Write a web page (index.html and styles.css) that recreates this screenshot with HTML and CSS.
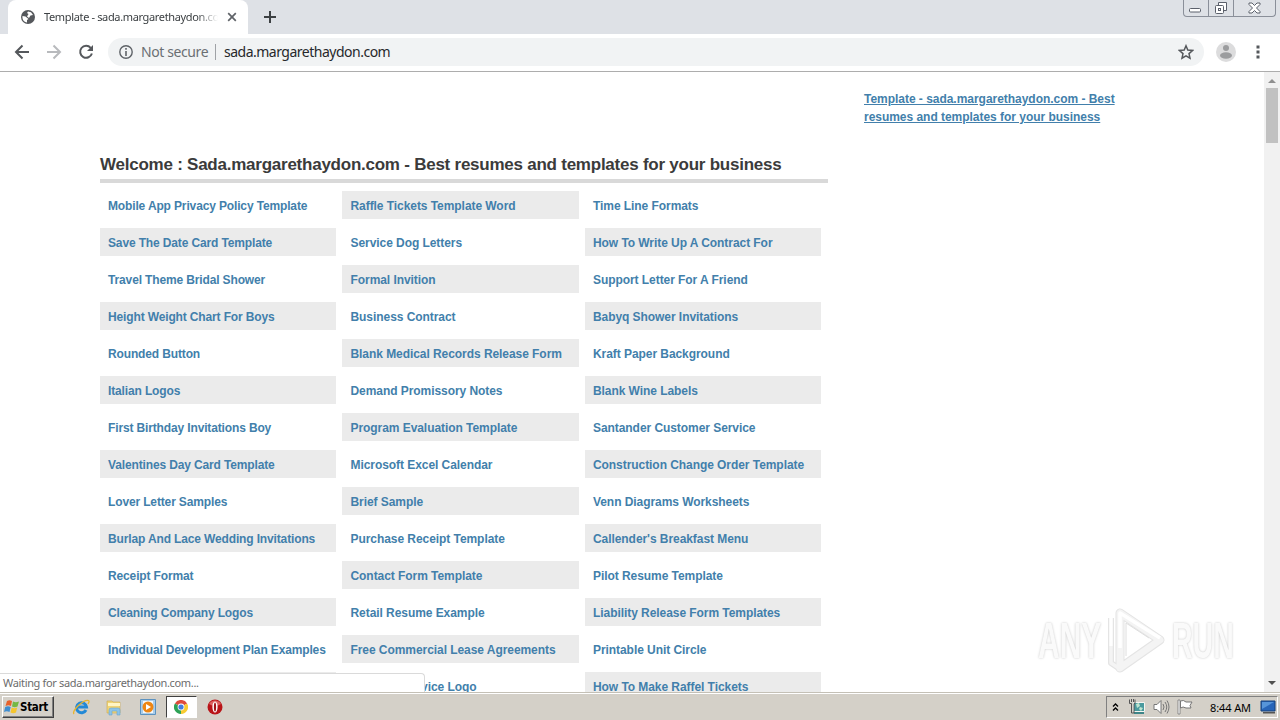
FILE: index.html
```html
<!DOCTYPE html>
<html lang="en">
<head>
    <meta charset="UTF-8">
    <title>Template - sada.margarethaydon.com</title>
    <link rel="stylesheet" href="styles.css">
</head>
<body>
    <div class="tabstrip">
        <div class="tab">
            <svg class="globe" width="14" height="14" viewBox="0 0 14 14"><circle cx="7" cy="7" r="7" fill="#55585c"/><path d="M1.500 6l3 .5 3 2.500-1.500 1v2.500C3 12 1 9.500 1.500 6zM7 1.500l3 .8 2 2.700-2.500.5L8 8 6 6.500 7.500 4 6 3z" fill="#fff"/></svg>
            <span class="tab-title">Template - sada.margarethaydon.com</span>
            <svg class="tab-close" width="10" height="10" viewBox="0 0 10 10"><path d="M1.200 1.200l7.600 7.600M8.800 1.200L1.200 8.800" stroke="#5f6368" stroke-width="1.700"/></svg>
        </div>
        <svg class="new-tab" width="12" height="12" viewBox="0 0 12 12"><path d="M6 0v12M0 6h12" stroke="#3c4043" stroke-width="2"/></svg>
        <div class="window-buttons">
            <span class="win-min"><svg width="13" height="5"><rect x=".5" y=".5" width="11" height="3.500" rx="1" fill="#fff" stroke="#5b606b"/></svg></span>
            <span class="win-max"><svg width="14" height="14"><path d="M4.500 4V1.500h8v8H10" fill="#fff" stroke="#5b606b"/><rect x="1.500" y="4.500" width="8" height="8" rx="1" fill="#fff" stroke="#5b606b"/><rect x="4.500" y="7.500" width="2" height="2" fill="none" stroke="#5b606b"/></svg></span>
            <span class="win-close"><svg width="13" height="12"><path d="M1 1h3l2.500 2.500L9 1h3v1.500L8.500 6l3.500 3.500V11H9L6.500 8.500 4 11H1V9.500L4.500 6 1 2.500z" fill="#fff" stroke="#5b606b"/></svg></span>
        </div>
    </div>

    <div class="toolbar">
        <svg class="nav" width="16" height="16" viewBox="0 0 16 16"><path d="M15 8H2.500M8.500 1.500L2 8l6.500 6.500" fill="none" stroke="#55585c" stroke-width="2"/></svg>
        <svg class="nav" width="16" height="16" viewBox="0 0 16 16"><path d="M1 8h12.500M7.500 1.500L14 8l-6.500 6.500" fill="none" stroke="#b8babd" stroke-width="2"/></svg>
        <svg class="nav" width="16" height="16" viewBox="0 0 16 16"><path d="M12.700 3.800A6 6 0 1 0 13.900 9.500" fill="none" stroke="#55585c" stroke-width="2"/><path d="M15 1v6H9z" fill="#55585c"/></svg>
        <div class="omnibox">
            <svg width="14" height="14" viewBox="0 0 14 14"><circle cx="7" cy="7" r="6.200" fill="none" stroke="#5f6368" stroke-width="1.400"/><path d="M7 3v1.700M7 6v5" stroke="#5f6368" stroke-width="1.600"/></svg>
            <span class="not-secure">Not secure</span>
            <span class="divider"></span>
            <span class="url">sada.margarethaydon.com</span>
            <svg class="star" width="16" height="16" viewBox="0 0 16 16"><path d="M8 1.800l1.800 4.300 4.700.4-3.500 3.100 1 4.600L8 11.800l-4 2.400 1-4.600L1.500 6.500l4.700-.4z" fill="none" stroke="#55585c" stroke-width="1.500"/></svg>
        </div>
        <svg class="avatar" width="20" height="20" viewBox="0 0 20 20"><circle cx="10" cy="10" r="10" fill="#dcdcdd"/><circle cx="10" cy="6" r="3" fill="#9b9c9e"/><ellipse cx="10" cy="13.500" rx="6" ry="3.200" fill="#9b9c9e"/></svg>
        <svg class="menu" width="4" height="14" viewBox="0 0 4 14"><path d="M.5.500h3v3h-3zM.5 5.500h3v3h-3zM.5 10.500h3v3h-3z" fill="#55585c"/></svg>
    </div>

    <div class="viewport">
        <div class="page">
            <div class="main">
                <h1>Welcome : Sada.margarethaydon.com - Best resumes and templates for your business</h1>
                <ul class="links">
                    <li><a>Mobile App Privacy Policy Template</a></li>
                    <li><a>Raffle Tickets Template Word</a></li>
                    <li><a>Time Line Formats</a></li>
                    <li><a>Save The Date Card Template</a></li>
                    <li><a>Service Dog Letters</a></li>
                    <li><a>How To Write Up A Contract For</a></li>
                    <li><a>Travel Theme Bridal Shower</a></li>
                    <li><a>Formal Invition</a></li>
                    <li><a>Support Letter For A Friend</a></li>
                    <li><a>Height Weight Chart For Boys</a></li>
                    <li><a>Business Contract</a></li>
                    <li><a>Babyq Shower Invitations</a></li>
                    <li><a>Rounded Button</a></li>
                    <li><a>Blank Medical Records Release Form</a></li>
                    <li><a>Kraft Paper Background</a></li>
                    <li><a>Italian Logos</a></li>
                    <li><a>Demand Promissory Notes</a></li>
                    <li><a>Blank Wine Labels</a></li>
                    <li><a>First Birthday Invitations Boy</a></li>
                    <li><a>Program Evaluation Template</a></li>
                    <li><a>Santander Customer Service</a></li>
                    <li><a>Valentines Day Card Template</a></li>
                    <li><a>Microsoft Excel Calendar</a></li>
                    <li><a>Construction Change Order Template</a></li>
                    <li><a>Lover Letter Samples</a></li>
                    <li><a>Brief Sample</a></li>
                    <li><a>Venn Diagrams Worksheets</a></li>
                    <li><a>Burlap And Lace Wedding Invitations</a></li>
                    <li><a>Purchase Receipt Template</a></li>
                    <li><a>Callender's Breakfast Menu</a></li>
                    <li><a>Receipt Format</a></li>
                    <li><a>Contact Form Template</a></li>
                    <li><a>Pilot Resume Template</a></li>
                    <li><a>Cleaning Company Logos</a></li>
                    <li><a>Retail Resume Example</a></li>
                    <li><a>Liability Release Form Templates</a></li>
                    <li><a>Individual Development Plan Examples</a></li>
                    <li><a>Free Commercial Lease Agreements</a></li>
                    <li><a>Printable Unit Circle</a></li>
                    <li></li>
                    <li><a>Catering Service Logo</a></li>
                    <li><a>How To Make Raffel Tickets</a></li>
                </ul>
            </div>
            <div class="sidebar">
                <a>Template - sada.margarethaydon.com - Best<br>resumes and templates for your business</a>
            </div>
        </div>
        <div class="scrollbar">
            <svg class="arrow" width="8" height="4"><path d="M0 4l4-4 4 4z" fill="#8f8f8f"/></svg>
            <div class="thumb"></div>
            <svg class="arrow arrow-down" width="8" height="4"><path d="M0 0h8L4 4z" fill="#505050"/></svg>
        </div>
        <div class="status">Waiting for sada.margarethaydon.com...</div>
        <div class="watermark">
            <span class="mark-any">ANY</span>
            <svg width="60" height="66" viewBox="0 0 60 66"><g fill="none" stroke-linejoin="round"><path d="M14 5v55L54 32z" stroke="#e4e4e4" stroke-width="9"/><path d="M5 10v45l9 6" stroke="#e4e4e4" stroke-width="6"/><path d="M14 5v55L54 32z" stroke="#f4f4f4" stroke-width="7"/><path d="M20 48V15l23 15" stroke="#dedede" stroke-width="1"/><path d="M14 40V5l40 25M5 38V10" stroke="#fff" stroke-width="3.500"/><path d="M5 38v17l9 6" stroke="#f4f4f4" stroke-width="3.500"/></g></svg>
            <span class="mark-run">RUN</span>
        </div>
    </div>

    <div class="taskbar">
        <div class="start">
            <svg width="16" height="16" viewBox="0 0 16 16"><path d="M3 2c2-1 3-1 5 0L7 7C5 6 4 6 1.500 7z" fill="#e8622c"/><path d="M9 2.500c2 1 3.500 1 6 0L13.500 7.500c-2 1-3.500 1-5.500 0z" fill="#75b843"/><path d="M1.200 8c2-1 3.500-1 5.500 0l-1.200 5c-2-1-3.500-1-5.500 0z" fill="#408ed0"/><path d="M7.700 8.500c2 1 3.500 1 5.500 0l-1.200 5c-2 1-3.500 1-5.500 0z" fill="#f5c52d"/></svg>
            <span>Start</span>
        </div>
        <div class="task">
            <svg width="18" height="18" viewBox="0 0 18 18"><path d="M14 12A5 5 0 1 1 14.500 9H5" fill="none" stroke="#2389d6" stroke-width="3"/><path d="M2 16C-1 13 12 1 16.500 2.500c1 .5.500 2-.5 3.500" fill="none" stroke="#e8b42f" stroke-width="1.300"/></svg>
        </div>
        <div class="task">
            <svg width="18" height="18" viewBox="0 0 18 18"><path d="M2 3h5l1 1h7v11H2z" fill="#f0d477" stroke="#c9aa50" stroke-width=".6"/><path d="M3 5h12v3H3z" fill="#fff5c4"/><path d="M4 17v-5q0-2 2-2h7q2 0 2 2v5h-3v-4H7v4z" fill="#8cc4e8" stroke="#6aa4cc" stroke-width=".6"/></svg>
        </div>
        <div class="task">
            <svg width="16" height="16" viewBox="0 0 16 16"><path d="M.5.500h15v15H.5z" fill="#a9cdea" stroke="#5c92bf"/><path d="M3 2h10v12H3z" fill="#f3f8fc"/><circle cx="8" cy="8" r="5.500" fill="#ee8613"/><path d="M6 5l5 3-5 3z" fill="#fff"/></svg>
        </div>
        <div class="task active">
            <svg width="14" height="14" viewBox="0 0 14 14"><path d="M7 7L.9 3.500A7 7 0 0 1 13.100 3.500z" fill="#de4b3c"/><path d="M7 7l6.100-3.500A7 7 0 0 1 7 14z" fill="#f8cb32"/><path d="M7 7v7A7 7 0 0 1 .9 3.500z" fill="#2da256"/><circle cx="7" cy="7" r="3.400" fill="#fff"/><circle cx="7" cy="7" r="2.600" fill="#427de0"/></svg>
        </div>
        <div class="task">
            <svg width="16" height="16" viewBox="0 0 16 16"><circle cx="8" cy="8" r="7.500" fill="#b91418"/><path d="M2 5a7 7 0 0 1 12 0q-6 4-12 0z" fill="#dd6261"/><ellipse cx="8" cy="8" rx="2.600" ry="5.500" fill="#fff"/><ellipse cx="8" cy="8" rx="1.100" ry="4.600" fill="#a01216"/></svg>
        </div>
        <div class="tray">
            <svg class="chevrons" width="7" height="9" viewBox="0 0 7 9"><path d="M1 3.500L3.500 1 6 3.500M1 7.500L3.500 5 6 7.500" fill="none" stroke="#000" stroke-width="1.300"/></svg>
            <svg class="network" width="16" height="16" viewBox="0 0 16 16"><path d="M4.500 3.500h11v9h-11z" fill="#4a9a9e" stroke="#f5f5f0"/><path d="M5 13h10v2H5z" fill="#3f8588"/><path d="M7 5l3-1 1 3-3 2zM11 8l3 1-2 3-2-2z" fill="#bde3ce"/><path d="M.5.500v4h2V14H5V4.500h1v-4M2.500 0v3M4.500 0v3" fill="none" stroke="#555"/></svg>
            <svg class="speaker" width="17" height="16" viewBox="0 0 17 16"><path d="M1 5.500h3l4-4v13l-4-4H1z" fill="#fff" stroke="#777"/><path d="M10 5q2 3 0 6M12 3q3.500 5 0 10M14 1.500q4 6.500 0 13" fill="none" stroke="#777"/></svg>
            <svg class="flag" width="16" height="16" viewBox="0 0 16 16"><path d="M1 1h2v14H1z" fill="#fff" stroke="#777" stroke-width=".8"/><path d="M3.500 2q3-1.500 5.500 1h6l-2 3.500 1 2.500H9Q6 7 3.500 9z" fill="#fff" stroke="#777"/></svg>
            <span class="clock">8:44 AM</span>
            <svg class="desktop" width="16" height="14" viewBox="0 0 16 14"><path d="M1 1h14v10H1z" fill="#2865b8" stroke="#174178"/><path d="M2 2h12L2 9z" fill="#5795d9"/><path d="M3 12h12v1.500H3z" fill="#555"/></svg>
        </div>
    </div>
</body>
</html>
```
FILE: styles.css
```css
body {
    margin: 0;
    width: 1280px;
    height: 720px;
    overflow: hidden;
    display: flex;
    flex-direction: column;
    background: #fff;
    font-family: "Noto Sans", "DejaVu Sans", sans-serif;
}

svg {
    display: block;
    flex: none;
}

/* tab strip */
.tabstrip {
    height: 34px;
    flex: none;
    display: flex;
    align-items: flex-start;
    background: #dee1e6;
}

.tab {
    width: 240px;
    height: 34px;
    box-sizing: border-box;
    margin-left: 8px;
    padding-left: 13px;
    display: flex;
    align-items: center;
    background: #fff;
    border-radius: 8px 8px 0 0;
}

.tab-title {
    width: 175px;
    margin-left: 8px;
    padding-left: 1px;
    box-sizing: border-box;
    overflow: hidden;
    white-space: nowrap;
    font-size: 11px;
    line-height: 16px;
    letter-spacing: -0.35px;
    color: #3c4043;
    -webkit-mask-image: linear-gradient(to right, #000 88%, transparent);
    mask-image: linear-gradient(to right, #000 88%, transparent);
}

.tab-close {
    margin-left: 9px;
}

.new-tab {
    margin: 11px 0 0 16px;
}

.window-buttons {
    width: 93px;
    height: 17px;
    margin: 0 4px 0 auto;
    box-sizing: border-box;
    display: flex;
    border: 1px solid #8a8f99;
    border-top: 0;
    border-radius: 0 0 4px 4px;
}

.window-buttons span {
    display: flex;
    justify-content: center;
    align-items: center;
}

.win-min {
    width: 24px;
    padding-top: 4px;
    border-right: 1px solid #8a8f99;
}

.win-max {
    width: 25px;
    border-right: 1px solid #8a8f99;
}

.win-close {
    width: 41px;
}

/* toolbar */
.toolbar {
    height: 38px;
    flex: none;
    box-sizing: border-box;
    padding: 0 20px 2px 14px;
    display: flex;
    align-items: center;
    border-bottom: 1px solid #adadad;
}

.nav {
    margin-right: 16px;
}

.omnibox {
    width: 1096px;
    height: 28px;
    margin-left: -2px;
    box-sizing: border-box;
    padding: 0 10px 0 11px;
    display: flex;
    align-items: center;
    border-radius: 14px;
    background: #f1f3f4;
    font-size: 14px;
}

.not-secure {
    width: 67px;
    margin-left: 8px;
    white-space: nowrap;
    color: #6b6f73;
    letter-spacing: -0.4px;
}

.divider {
    width: 1px;
    height: 16px;
    margin: 0 8px 0 7px;
    background: #9fa2a6;
}

.url {
    color: #26282b;
    letter-spacing: -0.5px;
}

.star {
    margin-left: auto;
}

.avatar {
    margin-left: 12px;
}

.menu {
    margin-left: auto;
}

/* page */
.viewport {
    position: relative;
    height: 620px;
    flex: none;
    display: flex;
    overflow: hidden;
}

.page {
    width: 1264px;
    height: 620px;
    box-sizing: border-box;
    padding-left: 100px;
    display: flex;
    overflow: hidden;
    font-family: "Liberation Sans", Arial, sans-serif;
}

.main {
    width: 728px;
    flex: none;
}

h1 {
    margin: 79px 0 8px;
    padding-bottom: 1px;
    height: 27px;
    border-bottom: 4px solid #d9d9d9;
    font-size: 17px;
    line-height: 27px;
    letter-spacing: -0.24px;
    color: #3b3b3b;
    white-space: nowrap;
}

.links {
    margin: 0;
    padding: 0;
    list-style: none;
    display: grid;
    grid-template-columns: repeat(3, 236.3px);
    column-gap: 6.2px;
    row-gap: 9px;
}

.links li {
    height: 28px;
    padding-left: 8px;
    font-size: 12px;
    line-height: 30px;
    letter-spacing: -0.06px;
    font-weight: bold;
    white-space: nowrap;
}

.links li:nth-child(3n + 1) {
    letter-spacing: -0.14px;
}

.links li:nth-child(even) {
    background: #ebebeb;
}

.page a {
    color: #427fab;
}

.sidebar {
    margin: 18px 0 0 36px;
    font-size: 12px;
    line-height: 18px;
    font-weight: bold;
    letter-spacing: -0.03px;
    white-space: nowrap;
}

.sidebar a {
    text-decoration: underline;
}

.scrollbar {
    width: 16px;
    display: flex;
    flex-direction: column;
    align-items: center;
    background: #f1f1f1;
}

.arrow {
    margin: 7px 0 5px;
}

.thumb {
    width: 12px;
    height: 55px;
    background: #c1c1c1;
}

.arrow-down {
    margin: auto 0 7px;
}

.status {
    position: absolute;
    left: 0;
    bottom: 0;
    width: 425px;
    height: 19px;
    box-sizing: border-box;
    padding-left: 3px;
    border: 1px solid #dadada;
    border-width: 1px 1px 0 0;
    border-radius: 0 4px 0 0;
    background: #fff;
    font-size: 11px;
    line-height: 18px;
    letter-spacing: -0.34px;
    color: #6c6c6c;
}

.watermark {
    position: absolute;
    left: 1038px;
    top: 536px;
    width: 196px;
    height: 66px;
    display: flex;
    align-items: center;
    font-family: "Liberation Sans", Arial, sans-serif;
    font-size: 50px;
    font-weight: bold;
    line-height: 60px;
    color: #fafafa;
    text-shadow: 0 0 3px #c4c4c4;
}

.watermark span {
    width: 64px;
    white-space: nowrap;
    transform: scaleX(0.6);
    transform-origin: left;
}

.watermark svg {
    margin: 0 6px 0 4px;
}

.watermark .mark-run {
    transform: scaleX(0.57);
}

/* taskbar */
.taskbar {
    height: 28px;
    flex: none;
    box-sizing: border-box;
    padding: 2px 2px 1px;
    display: flex;
    align-items: center;
    background: #d4d0c8;
    border-top: 1px solid #c4c0b6;
    box-shadow: inset 0 1px #fff;
}

.start {
    width: 52px;
    height: 22px;
    box-sizing: border-box;
    padding-left: 1px;
    margin-right: 11px;
    display: flex;
    align-items: center;
    border: 1px solid;
    border-color: #fff #404040 #404040 #fff;
    box-shadow: inset -1px -1px #808080;
    font-family: "DejaVu Sans Condensed", "DejaVu Sans", sans-serif;
    font-size: 11.5px;
    font-weight: bold;
    letter-spacing: -0.3px;
}

.task {
    width: 31px;
    height: 22px;
    margin-right: 2.5px;
    box-sizing: border-box;
    display: flex;
    align-items: center;
    justify-content: center;
}

.task.active {
    border: 1px solid;
    border-color: #404040 #fff #fff #404040;
    background: #fff;
}

.tray {
    width: 172px;
    height: 22px;
    box-sizing: border-box;
    margin-left: auto;
    padding: 0 1px 0 5px;
    display: flex;
    align-items: center;
    border: 1px solid;
    border-color: #808080 #fff #fff #808080;
}

.network {
    margin-left: 10px;
}

.speaker {
    margin-left: 8px;
}

.flag {
    margin-left: 7px;
}

.clock {
    margin-left: auto;
    margin-right: 9px;
    font-size: 11px;
    letter-spacing: -0.1px;
    white-space: nowrap;
    color: #000;
}
```
